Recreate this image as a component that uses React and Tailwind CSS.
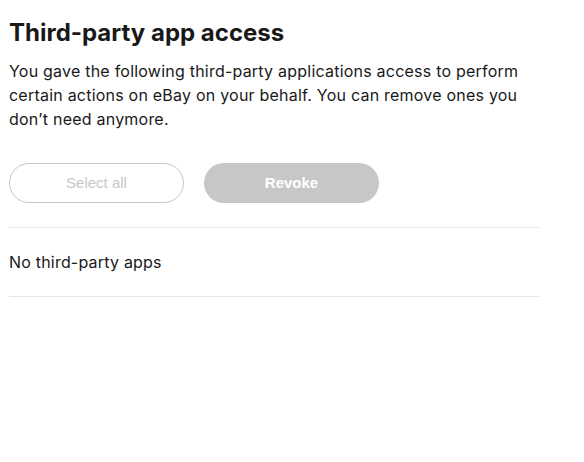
export default function App() {
  return (
    <div className="min-h-screen bg-white px-[9px] pt-[15px] font-['Inter',sans-serif] text-[#191919]">
      <div className="w-[530px]">
        <h2 className="text-[24px] font-bold leading-[36px]">Third-party app access</h2>
        <p className="mt-[8px] text-[16px] leading-[24px] tracking-[0.22px]">
          You gave the following third-party applications access to perform certain actions on eBay on your behalf. You can remove ones you don’t need anymore.
        </p>

        {/* Actions */}
        <div className="mt-[32px] flex gap-[20px]">
          <button
            disabled
            className="h-[40px] w-[175px] rounded-full border border-[#c7c7c7] bg-white font-['Liberation_Sans',sans-serif] text-[15px] text-[#c7c7c7]"
          >
            Select all
          </button>
          <button
            disabled
            className="h-[40px] w-[175px] rounded-full bg-[#c7c7c7] font-['Liberation_Sans',sans-serif] text-[15px] font-bold text-white"
          >
            Revoke
          </button>
        </div>

        <div className="mt-[24px] border-y border-[#e5e5e5] py-[23px]">
          <p className="text-[16px] leading-[22px] tracking-[0.2px]">No third-party apps</p>
        </div>
      </div>
    </div>
  )
}
